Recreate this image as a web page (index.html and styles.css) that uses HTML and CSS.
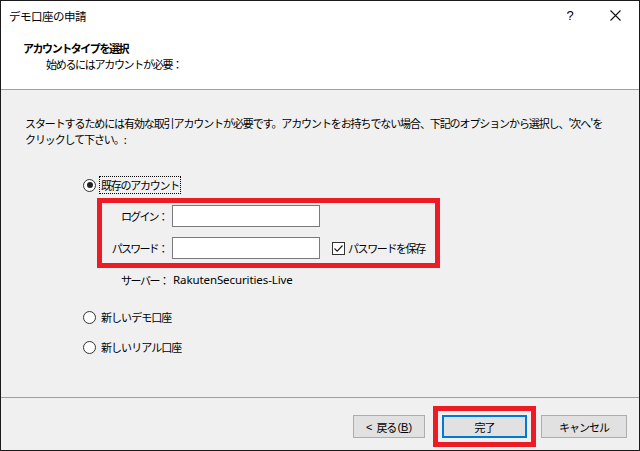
FILE: index.html
```html
<!DOCTYPE html>
<html lang="ja">
<head>
<meta charset="utf-8">
<title>デモ口座の申請</title>
<link rel="stylesheet" href="styles.css">
</head>
<body>
<div class="window">
  <div class="top">
    <div class="titlebar">
      <span class="title">デモ口座の申請</span>
      <span class="help">?</span>
      <span class="close"><svg width="11" height="11" viewBox="0 0 11 11"><path d="M0.5 0.5 L10.5 10.5 M10.5 0.5 L0.5 10.5" stroke="#111" stroke-width="1.1" fill="none"/></svg></span>
    </div>
    <div class="header">
      <div class="heading">アカウントタイプを選択</div>
      <div class="subheading">始めるにはアカウントが必要：</div>
    </div>
  </div>
  <div class="body">
    <p class="intro">スタートするためには有効な取引アカウントが必要です。アカウントをお持ちでない場合、下記のオプションから選択し、'次へ'を<br>クリックして下さい。:</p>
    <div class="radio-row first">
      <span class="radio checked"></span>
      <span class="radio-label focused">既存のアカウント</span>
    </div>
    <div class="highlight">
      <div class="fields">
        <span class="field-label">ログイン：</span>
        <span class="input"></span>
        <span></span>
        <span class="field-label">パスワード：</span>
        <span class="input"></span>
        <span class="check-row"><span class="checkbox"><svg width="11" height="11" viewBox="0 0 11 11"><path d="M1.5 5.5 L4.2 8.2 L9.5 2.5" stroke="#222" stroke-width="1.2" fill="none"/></svg></span><span class="check-label">パスワードを保存</span></span>
      </div>
    </div>
    <div class="server-row">
      <span class="server-label">サーバー：</span>
      <span class="server-value">RakutenSecurities-Live</span>
    </div>
    <div class="radio-row demo">
      <span class="radio"></span>
      <span class="radio-label">新しいデモ口座</span>
    </div>
    <div class="radio-row real">
      <span class="radio"></span>
      <span class="radio-label">新しいリアル口座</span>
    </div>
  </div>
  <div class="footer">
    <span class="btn back"><span class="lt">&lt;</span><span class="jp">戻る</span><span class="acc">(<u>B</u>)</span></span>
    <span class="highlight-btn"><span class="btn primary">完了</span></span>
    <span class="btn cancel">キャンセル</span>
  </div>
</div>
</body>
</html>
```
FILE: styles.css
```css
html, body {
  margin: 0;
  padding: 0;
  background: #1e1e1e;
}
body {
  font-family: "Noto Sans CJK JP", "Noto Sans", sans-serif;
  font-size: 11px;
  color: #000;
}
.window {
  width: 640px;
  height: 451px;
  box-sizing: border-box;
  border: 1px solid #1a1a1a;
  display: flex;
  flex-direction: column;
  background: #f0f0f0;
  overflow: hidden;
}
.top {
  background: #fff;
  height: 88px;
  border-bottom: 1px solid #a0a0a0;
  flex: none;
}
.titlebar {
  height: 29px;
  display: flex;
  align-items: center;
  padding-left: 8px;
}
.title {
  flex: 1;
  font-size: 11.5px;
  letter-spacing: -0.5px;
}
.help {
  width: 16px;
  text-align: center;
  font-size: 13px;
  font-family: "Liberation Sans", sans-serif;
  margin-right: 32px;
}
.close {
  width: 11px;
  height: 11px;
  margin-right: 18px;
  display: flex;
}
.header {
  padding-left: 22px;
  padding-top: 10px;
}
.heading {
  font-weight: bold;
  line-height: 16px;
  letter-spacing: -1.45px;
}
.subheading {
  padding-left: 23px;
  line-height: 16px;
  letter-spacing: -1.3px;
}
.body {
  flex: 1;
  border-bottom: 1px solid #a0a0a0;
  padding: 25px 0 0 24px;
}
.intro {
  margin: 0;
  line-height: 16px;
  white-space: nowrap;
  letter-spacing: -1.1px;
}
.radio-row {
  display: flex;
  align-items: center;
  height: 18px;
  margin-left: 58px;
}
.radio-row.first { margin-top: 29px; }
.radio-row.demo { margin-top: 20px; }
.radio-row.real { margin-top: 12px; }
.radio {
  width: 11px;
  height: 11px;
  border: 1px solid #333;
  border-radius: 50%;
  background: #fff;
  margin-right: 3px;
  display: flex;
  align-items: center;
  justify-content: center;
}
.radio.checked::after {
  content: "";
  width: 6px;
  height: 6px;
  border-radius: 50%;
  background: #222;
}
.radio-label {
  padding: 0 1px;
  line-height: 16px;
  border: 1px dotted transparent;
  letter-spacing: -0.95px;
}
.radio-label.focused {
  border-color: #000;
  letter-spacing: -1.25px;
}
.highlight {
  margin: 4px 0 0 72px;
  width: 333px;
  border: 5px solid #ed1c24;
  padding: 2px 0 4px 0;
}
.fields {
  display: grid;
  grid-template-columns: 65px 148px auto;
  column-gap: 5px;
  row-gap: 10px;
  align-items: center;
}
.field-label {
  text-align: right;
  letter-spacing: -1.8px;
}
.input {
  height: 20px;
  border: 1px solid #7a7a7a;
  background: #fff;
}
.check-row {
  display: flex;
  align-items: center;
  margin-left: 7px;
}
.check-label {
  letter-spacing: -1.4px;
}
.checkbox {
  width: 11px;
  height: 11px;
  border: 1px solid #333;
  background: #fff;
  margin-right: 3px;
  display: flex;
}
.server-row {
  display: flex;
  margin: 4px 0 0 96px;
  line-height: 16px;
}
.server-label {
  width: 52px;
  letter-spacing: -1.5px;
}
.server-value {
  letter-spacing: -0.1px;
  font-family: "Noto Sans", sans-serif;
  font-size: 11.5px;
}
.footer {
  height: 52px;
  flex: none;
  display: flex;
  align-items: flex-start;
  justify-content: flex-end;
  padding: 8px 12px 0 0;
  box-sizing: border-box;
}
.btn {
  height: 23px;
  box-sizing: border-box;
  border: 1px solid #adadad;
  background: #e1e1e1;
  display: flex;
  align-items: center;
  justify-content: center;
  letter-spacing: -1px;
}
.btn.back {
  width: 72px;
  margin-top: 9px;
  margin-right: 8px;
  letter-spacing: 0;
}
.back .lt {
  font-family: "Liberation Sans", sans-serif;
  margin-right: 4px;
}
.back .jp {
  letter-spacing: -1px;
}
.back .acc {
  font-family: "Liberation Sans", sans-serif;
  margin-left: 1px;
}
.highlight-btn {
  border: 5px solid #ed1c24;
  padding: 4px;
  display: flex;
}
.btn.primary {
  width: 85px;
  border: 2px solid #0078d7;
}
.btn.cancel {
  width: 86px;
  margin-top: 9px;
  margin-left: 5px;
}
```
